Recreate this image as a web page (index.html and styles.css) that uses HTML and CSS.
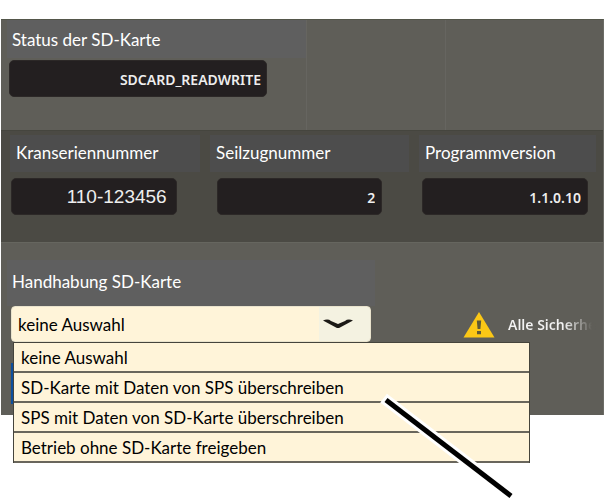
FILE: index.html
```html
<!DOCTYPE html>
<html lang="de">
<head>
<meta charset="utf-8">
<title>SD-Karte</title>
<link rel="stylesheet" href="styles.css">
</head>
<body>
<main class="panel">
  <section class="band status">
    <div class="status-cell">
      <label class="caption" for="status">Status der SD-Karte</label>
      <input class="value" id="status" value="SDCARD_READWRITE" readonly>
    </div>
    <div class="blank"></div>
    <div></div>
  </section>

  <section class="band dark">
    <div class="captions">
      <label class="caption" for="crane">Kranseriennummer</label>
      <label class="caption" for="hoist">Seilzugnummer</label>
      <label class="caption" for="version">Programmversion</label>
    </div>
    <div class="values">
      <input class="value serial" id="crane" value="110-123456" readonly>
      <input class="value" id="hoist" value="2" readonly>
      <input class="value" id="version" value="1.1.0.10" readonly>
    </div>
  </section>

  <section class="band handling">
    <div class="chooser">
      <label class="caption" for="mode">Handhabung SD-Karte</label>
      <div class="picker">
        <select id="mode">
          <option>keine Auswahl</option>
          <option>SD-Karte mit Daten von SPS überschreiben</option>
          <option>SPS mit Daten von SD-Karte überschreiben</option>
          <option>Betrieb ohne SD-Karte freigeben</option>
        </select>
        <svg class="chevron" viewBox="0 0 52 36" aria-hidden="true">
          <path d="M4 14.500 Q9 12.500 12 15 L19 18 L26 15 Q29 12.500 34 14.500 L21 21.500 Q19 22.500 17 21.500 Z" fill="#1c1a16"/>
        </svg>
        <div class="accent"></div>
        <ul class="menu" role="listbox" aria-label="Handhabung SD-Karte">
          <li role="option" aria-selected="true">keine Auswahl</li>
          <li role="option" aria-selected="false">SD-Karte mit Daten von SPS überschreiben</li>
          <li role="option" aria-selected="false">SPS mit Daten von SD-Karte überschreiben</li>
          <li role="option" aria-selected="false">Betrieb ohne SD-Karte freigeben</li>
        </ul>
        <svg class="pointer" viewBox="0 0 140 110" aria-hidden="true">
          <path d="M7.600 7.100 L135 105" stroke="#fff" stroke-width="11"/>
          <path d="M10 9 L135 105" stroke="#000" stroke-width="5"/>
        </svg>
      </div>
    </div>
    <p class="warning">
      <svg class="sign" viewBox="0 0 32 27" aria-hidden="true">
        <path d="M16 1 L31.500 26.500 H0.500 Z" fill="#fcc816"/>
        <path d="M13.800 9.500 h4.400 l-0.800 8.500 h-2.800 Z M14 20 h4 v3.200 h-4 Z" fill="#5e5938"/>
      </svg>
      <span class="message">Alle Sicherhe</span>
    </p>
  </section>
</main>
</body>
</html>
```
FILE: styles.css
```css
* {
  box-sizing: border-box;
}

body {
  min-height: 100vh;
  margin: 0;
  padding: 19px 1px 0;
  background: #fff;
  font-family: Lato, "Liberation Sans", sans-serif;
  font-size: 17px;
  line-height: 24px;
}

.panel {
  border-top: 1px solid #53564a;
  border-right: 1px solid #6c6c66;
  background: #5f5e58;
  color: #fff;
}

.band {
  border-top: 1px solid #5a5952;
}

.caption {
  display: block;
  background: #5f5f5f;
}

.value {
  display: block;
  width: 100%;
  height: 37px;
  padding: 2px 6px 0;
  border: 1px solid #2c2827;
  border-radius: 5px;
  background: #231f20;
  color: #eee;
  font: 600 14px/20px "Noto Sans", sans-serif;
  text-align: right;
}

.value.serial {
  padding: 0 9px;
  font: 19px/24px "Liberation Sans", sans-serif;
}

.status {
  display: grid;
  grid-template-columns: 305fr 140fr 157fr;
  border-top: 0;
}

.status-cell {
  padding: 0 0 33px 6px;
}

.status-cell .caption {
  padding: 8px 5px 6px;
}

.status-cell .value {
  width: 258px;
  margin: 2px 0 0 2px;
  padding: 2px 5px 0;
}

.blank {
  border: solid #666560;
  border-width: 0 1px;
}

.dark {
  padding: 4px 7px 27px 9px;
  border-color: #45453e;
  background: #4b4a44;
}

.captions {
  display: grid;
  grid-template-columns: 190fr 199fr 177fr;
  gap: 10px;
}

.captions .caption {
  padding: 6px 6px 7px;
  background: #4d4d4d;
}

.values {
  display: grid;
  grid-template-columns: repeat(3, 1fr);
  gap: 40px;
  padding: 6px 8px 0 1px;
}

.handling {
  display: grid;
  grid-template-columns: 374fr 140fr;
  gap: 88px;
  padding: 17px 0 73px;
  border-color: #66665f;
}

.chooser {
  padding-left: 6px;
}

.chooser .caption {
  padding: 10px 5px 12px;
}

.picker {
  position: relative;
  margin: 0 4px;
}

select {
  appearance: none;
  display: block;
  width: 100%;
  height: 36px;
  padding: 2px 6px 0;
  border: 1px solid #e9e3cd;
  border-radius: 4px;
  background: linear-gradient(to left, #f4f2e1 51px, #fff4d9 51px);
  color: #000;
  font: inherit;
}

.chevron {
  position: absolute;
  top: 0;
  right: 0;
  width: 52px;
  height: 36px;
}

.accent {
  position: absolute;
  top: 57px;
  left: 0;
  width: 4px;
  height: 41px;
  background: #0f4f9c;
}

.menu {
  position: absolute;
  top: 36px;
  left: 2px;
  width: 517px;
  margin: 0;
  padding: 0;
  border: solid #45443c;
  border-width: 1px 1px 0;
  background: #fff4d9;
  color: #000;
  list-style: none;
}

.menu li {
  height: 30px;
  padding: 3px 7px 0;
  border-bottom: 2px solid #69665c;
}

.pointer {
  position: absolute;
  top: 85px;
  left: 365px;
  width: 140px;
  height: 110px;
}

.warning {
  display: flex;
  align-items: center;
  gap: 13px;
  align-self: start;
  margin: 51px 0 0;
}

.sign {
  flex: none;
  width: 32px;
  height: 27px;
}

.message {
  overflow: hidden;
  background: linear-gradient(to right, #f2f2f2 56px, #5f5e58 84px);
  background-clip: text;
  color: transparent;
  font: 600 14px/24px "Noto Sans", sans-serif;
  white-space: nowrap;
}
```
